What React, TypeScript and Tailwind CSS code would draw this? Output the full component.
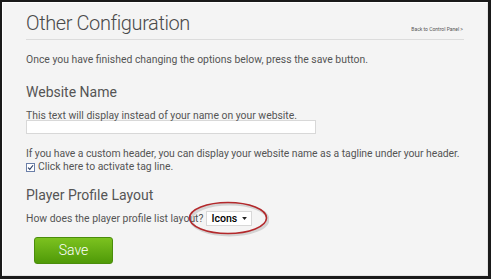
export default function App() {
  return (
    <div className="w-[491px] h-[279px] bg-[#1a1a1a] pl-[2px] pt-[2px] pr-[3px] pb-[3px]" style={{ fontFamily: 'Roboto, sans-serif' }}>
      <div className="relative h-full bg-[#f4f4f4] border-l border-t border-white border-r border-b border-r-[#e4e4e4] border-b-[#e4e4e4] px-[23px] text-[#555]">
        <div className="flex items-end justify-between border-b border-[#dcdcdc] pb-[3px] pt-[7px]">
          <h1 className="text-[20px] leading-[26px] font-light text-[#4a4a4a] tracking-[-0.4px]">Other Configuration</h1>
          <a className="text-[5px] text-[#555] mr-[1px] mb-[3px]">Back to Control Panel &gt;</a>
        </div>

        <p className="text-[10.4px] mt-[13px] leading-[14px]">Once you have finished changing the options below, press the save button.</p>

        <h2 className="text-[14px] text-[#555] mt-[15px] leading-[20px]">Website Name</h2>
        <p className="text-[10.4px] mt-[7px] leading-[14px]">This text will display instead of your name on your website.</p>
        <div className="w-[290px] h-[14px] bg-white border border-[#d8d8d8] -mt-[3px]" />

        <p className="text-[10.4px] mt-[13px] leading-[14px] tracking-[-0.05px] whitespace-nowrap">If you have a custom header, you can display your website name as a tagline under your header.</p>
        <label className="flex items-center gap-[3px] text-[10.4px] leading-[14px] -mt-[1px]">
          <span className="w-[9px] h-[9px] border border-[#6b7fa8] bg-white flex items-center justify-center">
            <svg viewBox="0 0 10 10" className="w-[7px] h-[7px]">
              <path d="M1.5 5.2 L4 7.8 L8.6 1.8" stroke="#2b3e66" strokeWidth="1.6" fill="none" />
            </svg>
          </span>
          Click here to activate tag line.
        </label>

        <h2 className="text-[14px] text-[#555] mt-[11px] leading-[20px]">Player Profile Layout</h2>
        <div className="flex items-center mt-[6px] text-[10.4px] leading-[14px]">
          <span>How does the player profile list layout?</span>
          <span className="ml-[3px] h-[15px] w-[46px] pl-[4px] pr-[4px] bg-white border border-[#d8d8d8] flex items-center justify-between text-black text-[10.6px] font-medium">
            Icons
            <svg viewBox="0 0 8 5" className="w-[5px] h-[3px]"><path d="M0 0 L8 0 L4 5 Z" fill="#222" /></svg>
          </span>
        </div>

        <button className="mt-[11px] ml-[8px] w-[79px] h-[27px] rounded-[3px] text-white text-[14px] font-light bg-gradient-to-b from-[#7cc21f] to-[#4f9a07] border border-[#4a8d0b]">
          Save
        </button>

        <svg className="absolute left-[184px] top-[196px] w-[82px] h-[38px]" viewBox="0 0 82 38">
          <ellipse cx="41.5" cy="19.5" rx="38.5" ry="15.5" fill="none" stroke="#00000022" strokeWidth="3" transform="translate(1 1)" />
          <ellipse cx="41" cy="19" rx="38.5" ry="15.5" fill="none" stroke="#b3282b" strokeWidth="1.6" />
        </svg>
      </div>
    </div>
  )
}
